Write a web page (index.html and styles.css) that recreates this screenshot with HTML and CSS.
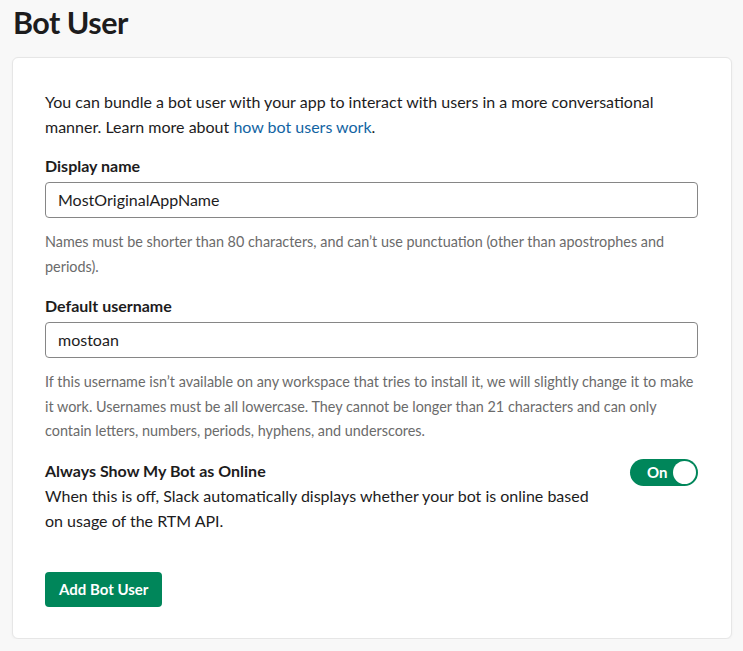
FILE: index.html
```html
<!DOCTYPE html>
<html>
<head>
<meta charset="utf-8">
<link rel="stylesheet" href="styles.css">
</head>
<body>
<h1 class="title">Bot User</h1>
<div class="card">
  <p class="intro">You can bundle a bot user with your app to interact with users in a more conversational manner. Learn more about <a class="link" href="#">how bot users work</a>.</p>

  <label class="label">Display name</label>
  <div class="input">MostOriginalAppName</div>
  <p class="help">Names must be shorter than 80 characters, and can’t use punctuation (other than apostrophes and periods).</p>

  <label class="label">Default username</label>
  <div class="input">mostoan</div>
  <p class="help">If this username isn’t available on any workspace that tries to install it, we will slightly change it to make it work. Usernames must be all lowercase. They cannot be longer than 21 characters and can only contain letters, numbers, periods, hyphens, and underscores.</p>

  <div class="toggle-row">
    <div class="toggle-text">
      <div class="label flush">Always Show My Bot as Online</div>
      <div class="desc">When this is off, Slack automatically displays whether your bot is online based on usage of the RTM API.</div>
    </div>
    <div class="toggle"><span class="toggle-label">On</span><span class="knob"></span></div>
  </div>

  <button class="btn">Add Bot User</button>
</div>
</body>
</html>
```
FILE: styles.css
```css
html, body {
  margin: 0;
  padding: 0;
  background: #f8f8f8;
}
body {
  font-family: Lato, "Noto Sans", sans-serif;
  color: #1d1c1d;
  padding: 0 11px 0 12px;
}
.title {
  margin: 0;
  padding: 2px 0 0 1px;
  font-size: 30.5px;
  font-weight: 700;
  line-height: 40px;
  letter-spacing: -0.5px;
  height: 55px;
  color: #1d1c1d;
}
.card {
  background: #fff;
  border: 1px solid #e6e6e6;
  border-radius: 6px;
  box-shadow: 0 1px 3px rgba(0,0,0,0.04);
  padding: 31px 33px 31px 32px;
  width: 653px;
}
.intro {
  margin: 0;
  font-size: 16px;
  line-height: 25px;
}
.link {
  color: #1264a3;
  text-decoration: none;
}
.label {
  display: block;
  margin-top: 15px;
  font-size: 16px;
  font-weight: 700;
  line-height: 24px;
  margin-bottom: 4px;
}
.label.flush {
  margin: 0;
}
.input {
  box-sizing: border-box;
  height: 36px;
  border: 1px solid #868686;
  border-radius: 4px;
  padding: 0 12px;
  font-size: 16px;
  line-height: 34px;
  color: #1d1c1d;
}
.help {
  margin: 12px 0 2px;
  font-size: 14.4px;
  line-height: 24.5px;
  color: #6b6b6b;
}
.toggle-row {
  margin-top: 15px;
  display: flex;
  justify-content: space-between;
  align-items: flex-start;
}
.toggle-text {
  width: 560px;
}
.desc {
  font-size: 16px;
  line-height: 25px;
}
.toggle {
  box-sizing: border-box;
  width: 68px;
  height: 27px;
  margin-top: 0;
  border-radius: 14px;
  background: #00865a;
  display: flex;
  align-items: center;
  justify-content: space-between;
  padding: 0 2px 0 17px;
}
.toggle-label {
  color: #fff;
  font-weight: 700;
  font-size: 15px;
}
.knob {
  width: 23px;
  height: 23px;
  border-radius: 50%;
  background: #fff;
}
.btn {
  margin-top: 39px;
  display: block;
  height: 35px;
  padding: 0 14px;
  border: none;
  border-radius: 4px;
  background: #00865a;
  color: #fff;
  font-family: Lato, "Noto Sans", sans-serif;
  font-size: 15px;
  font-weight: 700;
}
```
